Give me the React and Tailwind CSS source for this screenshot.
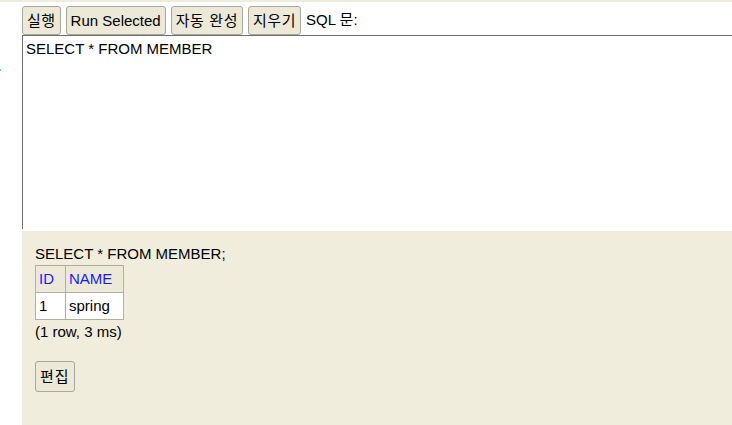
export default function App() {
  const font = { fontFamily: '"Liberation Sans", Arial, "Noto Sans CJK KR", sans-serif' };
  const btn =
    'h-[29px] px-[4px] rounded-[3px] border border-[#a9a69a] bg-[#ece9d8] text-[15px] text-black leading-none';
  const cell = 'h-[27px] pl-[3px] pr-[11px] border border-[#b3af9f] text-left';

  return (
    <div className="relative w-[732px] h-[425px] bg-white overflow-hidden text-black" style={font}>
      <div className="h-[2px] bg-[#f0ecdc]" />
      <div className="absolute left-0 top-[69px] w-[1px] h-[2px] bg-[#5ccfe6]" />

      <div className="ml-[22px]">
        {/* toolbar */}
        <div className="flex items-center gap-[5px] pt-[3px] h-[33px]">
          <button className={`${btn} tracking-[0.5px]`}>실행</button>
          <button className={btn}>Run Selected</button>
          <button className={`${btn} tracking-[0.6px]`}>자동 완성</button>
          <button className={`${btn} tracking-[0.5px]`}>지우기</button>
          <span className="text-[15px]">SQL 문:</span>
        </div>

        {/* sql editor */}
        <div className="h-[194px] border-l border-t border-[#6f6f6f] bg-white px-[3px] pt-[4px] text-[15px] leading-[18px]">
          SELECT * FROM MEMBER
        </div>

        {/* result */}
        <div className="h-[194px] mt-[2px] bg-[#f1eddd] pl-[13px] pt-[14px] text-[15px]">
          <div className="leading-[18px]">SELECT * FROM MEMBER;</div>
          <table className="mt-[2px] border-collapse border border-[#b3af9f]">
            <thead>
              <tr className="bg-[#ece9d8]">
                <th className={`${cell} font-normal text-[#1a1aff]`}>ID</th>
                <th className={`${cell} pr-[10px] font-normal text-[#1a1aff]`}>NAME</th>
              </tr>
            </thead>
            <tbody>
              <tr className="bg-white">
                <td className={cell}>1</td>
                <td className={`${cell} pr-[10px]`}>spring</td>
              </tr>
            </tbody>
          </table>
          <div className="mt-[3px] leading-[18px]">(1 row, 3 ms)</div>
          <button className={`${btn} mt-[20px] h-[31px] tracking-[1px]`}>편집</button>
        </div>
      </div>
    </div>
  );
}
